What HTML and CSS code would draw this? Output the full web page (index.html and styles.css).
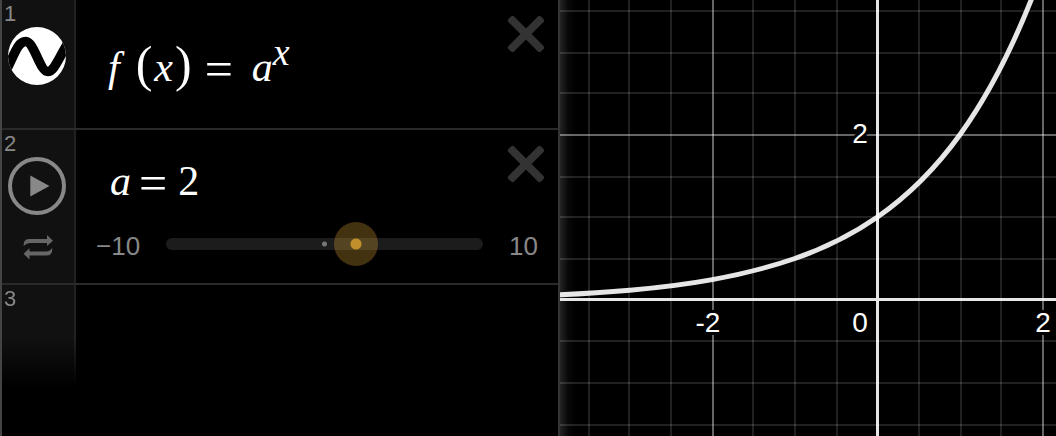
FILE: index.html
```html
<!DOCTYPE html>
<html lang="en">
<head>
<meta charset="utf-8">
<title>Graphing Calculator</title>
<link rel="stylesheet" href="styles.css">
</head>
<body>
<main class="calculator">
  <section class="expressions" aria-label="Expressions">
    <article class="row row-function">
      <div class="gutter">
        <span class="index">1</span>
        <button class="round" type="button" aria-label="Hide graph">
          <svg width="58" height="58" viewBox="0 0 58 58">
            <defs><clipPath id="disc"><circle cx="29" cy="29" r="29"/></clipPath></defs>
            <circle cx="29" cy="29" r="29" fill="#fff"/>
            <path clip-path="url(#disc)" d="M-1 42C7 26 10 14.500 17.700 14.500C26 14.500 32 44.500 39.700 44.500C46 44.500 49 34 60 16" fill="none" stroke="#000" stroke-width="9.500"/>
          </svg>
        </button>
      </div>
      <div class="content">
        <div class="math"><i>f</i><span class="paren open">(</span><i class="argument">x</i><span class="paren close">)</span><span class="equals">=</span><i class="base">a</i><sup>x</sup></div>
      </div>
      <button class="remove" type="button" aria-label="Delete expression 1">
        <svg width="38" height="38" viewBox="-19 -19 38 38" fill="#333"><rect x="-23" y="-4" width="46" height="8" rx="2.500" transform="rotate(45)"/><rect x="-23" y="-4" width="46" height="8" rx="2.500" transform="rotate(-45)"/></svg>
      </button>
    </article>

    <article class="row row-slider">
      <div class="gutter">
        <span class="index">2</span>
        <button class="round" type="button" aria-label="Play slider">
          <svg width="58" height="58" viewBox="0 0 58 58">
            <circle cx="29" cy="29" r="27" fill="none" stroke="#888" stroke-width="4"/>
            <path d="M22.300 18.500L41.500 29L22.300 39.500Z" fill="#888"/>
          </svg>
        </button>
        <button class="loop" type="button" aria-label="Loop mode">
          <svg width="30" height="26" viewBox="0 0 30 26" fill="#666">
            <path d="M.7 12V10.500Q.7 5 6.500 5H24V1L30 6.800L24 12V9H7Q3.500 9 .7 12Z"/>
            <path d="M29.300 14V15.500Q29.300 21.500 23.500 21.500H6.500V25.500L.5 19.700L6.500 14.300V17.500H23Q26.500 17.500 29.300 14Z"/>
          </svg>
        </button>
      </div>
      <div class="content">
        <div class="math"><i>a</i><span class="equals">=</span><span>2</span></div>
        <div class="slider">
          <label class="limit" for="a-value">−10</label>
          <div class="track">
            <input id="a-value" class="range" type="range" min="-10" max="10" value="2">
          </div>
          <span class="limit">10</span>
        </div>
      </div>
      <button class="remove" type="button" aria-label="Delete expression 2">
        <svg width="38" height="38" viewBox="-19 -19 38 38" fill="#333"><rect x="-23" y="-4" width="46" height="8" rx="2.500" transform="rotate(45)"/><rect x="-23" y="-4" width="46" height="8" rx="2.500" transform="rotate(-45)"/></svg>
      </button>
    </article>

    <article class="row row-empty">
      <div class="gutter"><span class="index">3</span></div>
    </article>
  </section>

  <section class="graph" aria-label="Graph">
    <svg class="plot" role="img" aria-label="Graph of a to the power x">
      <path class="minor" d="M29 0V2000M69 0V2000M111 0V2000M193 0V2000M235 0V2000M277 0V2000M359 0V2000M401 0V2000M441 0V2000M525 0V2000M565 0V2000M607 0V2000"/>
      <path class="minor" d="M0 11H3000M0 53H3000M0 93H3000M0 177H3000M0 217H3000M0 259H3000M0 341H3000M0 383H3000M0 425H3000"/>
      <path class="major" d="M153 0V2000M483 0V2000"/>
      <path class="major" d="M0 135H3000"/>
      <path class="axis" d="M317.500 0V2000M0 299.500H3000"/>
      <path class="curve" d="M-12.900 295.300C14.600 294.200 42.200 292.600 69.700 290.200C97.200 287.800 124.800 284.600 152.300 279.600C179.800 274.600 207.400 268 234.900 258.500C262.400 249 290 236.100 317.500 217C345 197.900 372.600 172.600 400.100 134.500C427.600 96.400 455.200 45.700 482.700 -30.500"/>
      <g class="labels">
        <text x="148" y="332">-2</text>
        <text x="300" y="332">0</text>
        <text x="483" y="332">2</text>
        <text x="300" y="143">2</text>
      </g>
    </svg>
  </section>
</main>
</body>
</html>
```
FILE: styles.css
```css
* { box-sizing: border-box; }

body {
  margin: 0;
  background: #000;
  color: #fff;
  font-family: "Liberation Sans", Arial, sans-serif;
}

button {
  display: block;
  padding: 0;
  border: 0;
  background: none;
  cursor: pointer;
}

svg { display: block; }

.calculator {
  display: flex;
  min-height: 100vh;
}

.expressions {
  flex: 0 0 560px;
  border-left: 2px solid #444;
  border-right: 2px solid #333;
}

.row {
  display: flex;
  border-bottom: 2px solid #2a2a2a;
}

.row-function { min-height: 130px; }
.row-slider { min-height: 155px; }
.row-empty { border-bottom: 0; }

.gutter {
  flex: 0 0 74px;
  padding: 1px 0 0 2px;
  border-right: 2px solid #222;
  background: #111;
}

.row-empty .gutter {
  height: 104px;
  mask-image: linear-gradient(#000 50%, transparent);
}

.index {
  display: block;
  color: #888;
  font-size: 22px;
  line-height: 26px;
}

.round { margin-left: 4px; }

.loop { margin: 19px 0 0 19px; }

.content {
  flex: 1;
  min-width: 0;
}

.math {
  display: flex;
  align-items: baseline;
  font-family: "Liberation Serif", "Times New Roman", serif;
  font-size: 42px;
  line-height: 48px;
}

.row-function .math { padding: 40px 0 0 32px; }
.row-slider .math { padding: 27px 0 0 34px; }

.paren { font-size: 50px; }

.open { margin-left: 16px; }
.argument { margin-left: 2px; }
.close { margin: 0 5px 0 2px; }

.equals {
  align-self: flex-end;
  margin: 0 11px 0 8px;
  font-size: 50px;
  line-height: 44px;
}

.base { margin-left: 8px; }

sup {
  align-self: flex-start;
  font-size: 38px;
  font-style: italic;
  line-height: 24px;
}

.slider {
  display: flex;
  align-items: center;
  height: 44px;
  margin: 17px -48px 0 20px;
}

.limit {
  flex: 0 0 70px;
  padding-top: 3px;
  color: #888;
  font-size: 26px;
  line-height: 30px;
}

.track {
  flex: 1;
  display: flex;
  align-items: center;
  height: 12px;
  border-radius: 6px;
  background: radial-gradient(circle, #777 2px, transparent 3px) #1c1c1c;
}

.track + .limit {
  flex-basis: 46px;
  margin-left: 26px;
}

.range {
  flex: 1;
  height: 44px;
  margin: 0 -22px;
  appearance: none;
  background: none;
}

.range::-webkit-slider-thumb {
  appearance: none;
  width: 44px;
  height: 44px;
  border-radius: 50%;
  background: radial-gradient(circle, #c1902b 5px, rgba(193, 144, 43, 0.35) 6px);
}

.remove {
  align-self: flex-start;
  margin: 15px 13px 0 0;
}

.graph {
  position: relative;
  flex: 1;
  min-width: 0;
  overflow: hidden;
}

.graph::after {
  content: "";
  position: absolute;
  inset: 0 auto 0 0;
  width: 16px;
  background: linear-gradient(to right, rgba(255, 255, 255, 0.14), rgba(255, 255, 255, 0.03) 50%, transparent);
}

.plot {
  width: 100%;
  height: 100%;
}

.minor {
  stroke: #fff;
  stroke-opacity: 0.13;
  stroke-width: 2;
}

.major {
  stroke: #fff;
  stroke-opacity: 0.4;
  stroke-width: 2;
}

.axis {
  stroke: #fff;
  stroke-opacity: 0.9;
  stroke-width: 3;
}

.curve {
  fill: none;
  stroke: #fff;
  stroke-opacity: 0.9;
  stroke-width: 5;
}

.labels {
  fill: #fff;
  stroke: #000;
  stroke-width: 6;
  stroke-linejoin: round;
  paint-order: stroke;
  font-size: 28px;
  text-anchor: middle;
}
```
